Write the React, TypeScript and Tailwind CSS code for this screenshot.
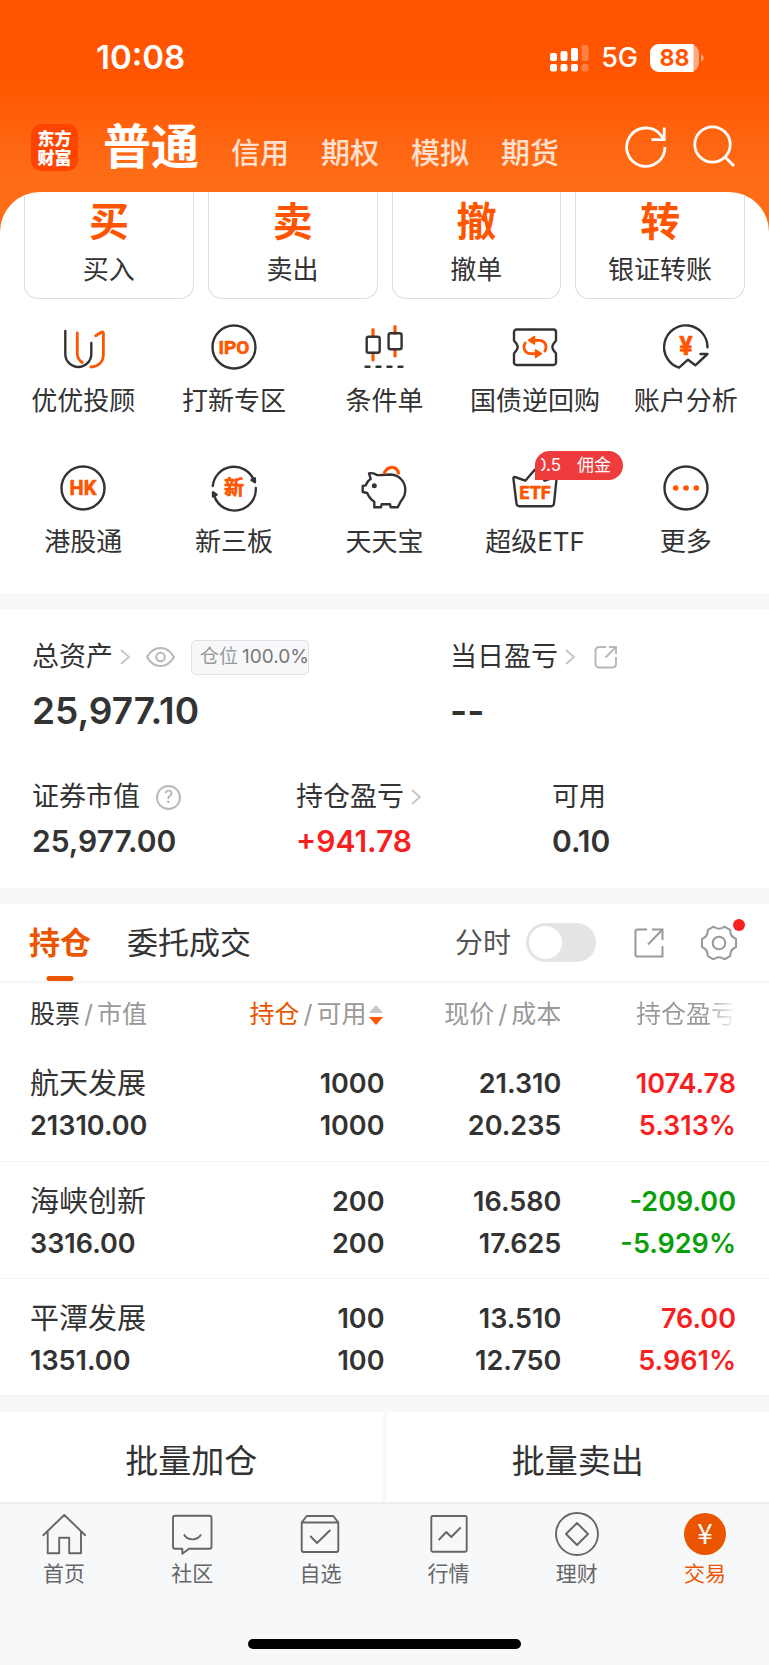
import React, { useState } from 'react';

interface Holding {
  name: string;
  marketValue: string;
  amount: string;
  available: string;
  price: string;
  cost: string;
  profit: string;
  profitRate: string;
  up: boolean; // red when up, green when down
}

const holdings: Holding[] = [
  { name: '航天发展', marketValue: '21310.00', amount: '1000', available: '1000', price: '21.310', cost: '20.235', profit: '1074.78', profitRate: '5.313%', up: true },
  { name: '海峡创新', marketValue: '3316.00', amount: '200', available: '200', price: '16.580', cost: '17.625', profit: '-209.00', profitRate: '-5.929%', up: false },
  { name: '平潭发展', marketValue: '1351.00', amount: '100', available: '100', price: '13.510', cost: '12.750', profit: '76.00', profitRate: '5.961%', up: true },
];

const quickActions = [
  { mark: '买', label: '买入' },
  { mark: '卖', label: '卖出' },
  { mark: '撤', label: '撤单' },
  { mark: '转', label: '银证转账' },
];

// shared wrapper for the 48px service icons
const ServiceIcon: React.FC<{ children: React.ReactNode }> = ({ children }) => (
  <svg className="size-12 overflow-visible" viewBox="0 0 48 48" fill="none" stroke="#333" strokeWidth={2.4} strokeLinecap="round" strokeLinejoin="round" aria-hidden="true">
    {children}
  </svg>
);

// short orange word inside an icon
const IconText: React.FC<{ y: number; size: number; children: string }> = ({ y, size, children }) => (
  <text x="24" y={y} fontSize={size} textAnchor="middle" fill="#ff5500" stroke="#ff5500" strokeWidth={0.6} className="font-['Roboto','Noto_Sans_CJK_SC',sans-serif] font-bold">
    {children}
  </text>
);

const services = [
  {
    label: '优优投顾',
    icon: (
      <>
        <path d="M6.3 8v23a13 13 0 0 0 26 0V20" />
        <path d="M18.3 10v21c0 4 2 6.5 5 8.5M36.7 12.7l5.5-3.5c1.2-.7 2.2-.2 2.2 1.2V31c0 8-5 12.5-12.5 13" stroke="#ff5500" strokeWidth={2.8} />
      </>
    ),
  },
  {
    label: '打新专区',
    icon: (
      <>
        <circle cx="24" cy="24" r="21.5" />
        <IconText y={31} size={19}>IPO</IconText>
      </>
    ),
  },
  {
    label: '条件单',
    icon: (
      <>
        <path d="M13 6.5v7M13 30v7M35 3.5v7M35 26.5v6.5" stroke="#ff5500" strokeWidth={3.2} />
        <rect x="6.7" y="13.7" width="13" height="16" rx="2" />
        <rect x="28.6" y="10.3" width="13" height="16" rx="2" />
        <path d="M5.5 43.7h4M16.5 43.7h4M27.5 43.7h4M38.5 43.7h4" />
      </>
    ),
  },
  {
    label: '国债逆回购',
    icon: (
      <>
        <path d="M5.5 6.5h37A2.5 2.5 0 0 1 45 9v8.5c0 1-3.7 3-3.7 6.5s3.7 5.5 3.7 6.5v9a2.5 2.5 0 0 1-2.5 2.5h-37A2.5 2.5 0 0 1 3 39.5v-9c0-1 3.7-3 3.7-6.500S3 18.500 3 17.500V9a2.500 2.500 0 0 1 2.500-2.500z" />
        <path d="M22 17.300h6.500a6.500 6.500 0 0 1 6.500 6.700c0 1.500-.4 2.800-1.200 4M26 30.700h-6.500a6.500 6.500 0 0 1-6.500-6.700c0-1.500.4-2.800 1.200-4" stroke="#ff5500" strokeWidth={2.8} />
        <path d="M17.500 17.300l6-3.800v7.600zM30.500 30.700l-6-3.800v7.600z" fill="#ff5500" stroke="#ff5500" strokeWidth={1.5} />
      </>
    ),
  },
  {
    label: '账户分析',
    icon: (
      <>
        <path d="M45.5 24.3A21.7 21.7 0 1 0 17 44.700l9-8 7.300 5.600L45.500 31h-7" />
        <IconText y={32} size={25}>¥</IconText>
      </>
    ),
  },
  {
    label: '港股通',
    icon: (
      <>
        <circle cx="24" cy="24" r="21.5" />
        <IconText y={31} size={20}>HK</IconText>
      </>
    ),
  },
  {
    label: '新三板',
    icon: (
      <>
        <path d="M2.800 22A21.300 21.300 0 0 1 43.500 15.500M45.800 24A21.300 21.300 0 0 1 4.500 32.500" />
        <path d="M45 18.300l-3.500-2.200 3.300-1.800zM3 28.200l3.500 2.500-3.500 1.800z" fill="#333" />
        <IconText y={31} size={20}>新</IconText>
      </>
    ),
  },
  {
    label: '天天宝',
    icon: (
      <>
        <path d="M9 9.500c3-1 5.500-.2 8 1.500 5 .4 9-.5 14-.5 8 .5 14.300 7 14.300 15.500 0 5-2 8.500-4.600 11.500l-3 5.800h-7l-.7-3h-8.300l-.7 3h-6.700v-5.600c-3.500-2-5.500-5-7.100-8.700l-4.500-1v-6l3-.7c1-2.800 2.500-4.800 5-6.500z" />
        <circle cx="14.3" cy="21.7" r="2.5" fill="#333" stroke="none" />
        <path d="M24.500 8.500c3.500-7 12-7 14 .5" stroke="#ff5500" strokeWidth={3.2} />
      </>
    ),
  },
  {
    label: '超级ETF',
    badge: true,
    icon: (
      <>
        <path d="M4 13l10.300 3.700L24 5.500l9.700 11.200L44 13c1-.3 1.700.2 1.600 1.300L43 39.500c-.2 2-1 2.700-3 2.700H8.500c-2 0-2.800-.7-3-2.700L2.400 14.300C2.300 13.200 3 12.700 4 13z" />
        <IconText y={35} size={18}>ETF</IconText>
      </>
    ),
  },
  {
    label: '更多',
    icon: (
      <>
        <circle cx="24" cy="24" r="21.5" />
        <g fill="#ff5500" stroke="none">
          <circle cx="13.7" cy="24" r="2.8" />
          <circle cx="24" cy="24" r="2.8" />
          <circle cx="34.3" cy="24" r="2.8" />
        </g>
      </>
    ),
  },
];

const bottomTabs = [
  { label: '首页', icon: <path d="M2.700 25.700L24.300 5l21.400 20.700M7.700 21v22.300h11.500V27.700h10v15.600H41V21" /> },
  {
    label: '社区',
    icon: (
      <>
        <path d="M7 5.700h34.500a2 2 0 0 1 2 2v29a2 2 0 0 1-2 2H21l-6.700 5v-5H7a2 2 0 0 1-2-2v-29a2 2 0 0 1 2-2z" />
        <path d="M16 24.500c3.500 6.500 13.500 6.500 17 0" />
      </>
    ),
  },
  {
    label: '自选',
    icon: (
      <>
        <path d="M5.700 12.500h36.600V40a2 2 0 0 1-2 2H7.700a2 2 0 0 1-2-2V12.500l5-6.500h26.600l5 6.500" />
        <path d="M14.300 26l6.700 7 13.300-13" />
      </>
    ),
  },
  {
    label: '行情',
    icon: (
      <>
        <rect x="6.3" y="6" width="35.4" height="35.7" rx="1.5" />
        <path d="M13.700 30l7.600-8 5 5 9.400-9.700" />
      </>
    ),
  },
  {
    label: '理财',
    icon: (
      <>
        <circle cx="24" cy="24" r="21" />
        <path d="M24 13l11 11-11 11-11-11z" />
      </>
    ),
  },
  {
    label: '交易',
    active: true,
    icon: (
      <>
        <circle cx="24" cy="24" r="21" fill="#eb5500" stroke="none" />
        <text x="24" y="34" fontSize="28" textAnchor="middle" fill="#fff" stroke="none" className="font-['Noto_Sans_CJK_SC',sans-serif]">¥</text>
      </>
    ),
  },
];

const Chevron = () => (
  <svg className="h-[18px] w-3" viewBox="0 0 12 18" fill="none" stroke="#c4c4c4" strokeWidth={1.8} aria-hidden="true">
    <path d="M2 2l8 7-8 7" />
  </svg>
);

// iOS-like status bar
const StatusBar = () => (
  <div className="flex h-[114px] items-center justify-between pl-24 pr-[65px] pt-0.5 text-white">
    <span className="text-[33px] font-semibold">10:08</span>
    <div className="flex items-center">
      <svg className="mr-3 h-7 w-[39px]" viewBox="0 0 39 28" fill="#fff" aria-hidden="true">
        <rect x="0" y="9" width="7" height="8" rx="2" />
        <rect x="10.5" y="7" width="7" height="10" rx="2" />
        <rect x="21" y="4" width="7" height="13" rx="2" />
        <rect x="31.5" y="1" width="7" height="16" rx="2" opacity=".25" />
        <rect x="0" y="20" width="7" height="7.5" rx="2" />
        <rect x="10.5" y="20" width="7" height="7.5" rx="2" />
        <rect x="21" y="20" width="7" height="7.5" rx="2" />
        <rect x="31.5" y="20" width="7" height="7.5" rx="2" opacity=".25" />
      </svg>
      <span className="mr-3 text-[27px] font-medium">5G</span>
      <svg className="h-7 w-[54px]" viewBox="0 0 54 28" aria-hidden="true">
        <rect x="0" y="0" width="49" height="28" rx="9" fill="#fff" opacity=".5" />
        <path d="M9 0H43.500V28H9a9 9 0 0 1-9-9V9a9 9 0 0 1 9-9z" fill="#fff" />
        <path d="M51 10.500c3.500 1 3.500 6 0 7z" fill="#fff" opacity=".5" />
        <text x="24.5" y="22" fontSize="23" textAnchor="middle" fill="#ff5500" className="font-bold">88</text>
      </svg>
    </div>
  </div>
);

const Header = () => (
  <header className="bg-linear-to-b from-[#ff5500] from-40% to-[#ff6c16] to-90%">
    <StatusBar />
    <div className="flex h-[78px] items-center pb-3 pl-[31px] pr-[33px]">
      <div className="flex size-[47px] shrink-0 items-center justify-center rounded-[10px] bg-[#ff4400] text-white">
        <p className="w-[34px] font-['Noto_Sans_CJK_SC',sans-serif] text-[17px] leading-[19px] font-black">东方财富</p>
      </div>
      <nav className="ml-[25px] flex items-baseline gap-8 whitespace-nowrap text-[29px] font-medium text-white/80">
        <a href="#normal" className="text-[48px] leading-[60px] font-bold text-white">普通</a>
        <a href="#credit">信用</a>
        <a href="#option">期权</a>
        <a href="#sim">模拟</a>
        <a href="#future">期货</a>
      </nav>
      <div className="ml-auto flex gap-6">
        <button aria-label="刷新">
          <svg className="size-11" viewBox="0 0 44 44" fill="none" stroke="#fff" strokeWidth={2.8}>
            <path d="M41 22A19.200 19.200 0 1 1 36.500 9.800L40 14" />
            <path d="M40.200 2.500v12.200H27.500" />
          </svg>
        </button>
        <button aria-label="搜索">
          <svg className="size-11" viewBox="0 0 44 44" fill="none" stroke="#fff" strokeWidth={2.8}>
            <circle cx="20.5" cy="19.5" r="17.7" />
            <path d="M32.500 31.500l9.500 9.500" />
          </svg>
        </button>
      </div>
    </div>
  </header>
);

const Assets = () => (
  <section className="px-8 pt-7 pb-[27px] text-[#333]">
    <div className="grid grid-cols-[418fr_287fr]">
      <div>
        <div className="flex h-10 items-center text-[27px]">
          <span>总资产</span>
          <span className="ml-1.5"><Chevron /></span>
          <button className="ml-[15px]" aria-label="隐藏资产">
            <svg className="h-5 w-[29px]" viewBox="0 0 29 20" fill="none" stroke="#b8b8b8" strokeWidth={2}>
              <path d="M1 10C8-2 21-2 28 10 21 22 8 22 1 10z" />
              <circle cx="14.5" cy="10" r="4.3" />
            </svg>
          </button>
          <span className="ml-4 flex h-[35px] w-[118px] items-center gap-1 overflow-hidden whitespace-nowrap rounded-[5px] border border-[#e0e1e4] bg-[#f7f8fa] pl-2 text-[19px] text-[#777]">
            <span className="text-[#999]">仓位</span>
            <span>100.0%</span>
          </span>
        </div>
        <p className="mt-2.5 text-[37px] leading-[48px] font-semibold">25,977.10</p>
      </div>
      <div>
        <div className="flex h-10 items-center text-[27px]">
          <span>当日盈亏</span>
          <span className="ml-1.5"><Chevron /></span>
          <button className="ml-[18px]" aria-label="分享当日盈亏">
            <svg className="size-6" viewBox="0 0 24 24" fill="none" stroke="#b8b8b8" strokeWidth={2}>
              <path d="M12 2H5a3.500 3.500 0 0 0-3.500 3.500V19A3.500 3.500 0 0 0 5 22.500h13.500A3.500 3.500 0 0 0 22 19v-7M15 2h7v7M22 2L11.500 12.500" />
            </svg>
          </button>
        </div>
        <p className="mt-2.5 text-[37px] leading-[48px] font-semibold">--</p>
      </div>
    </div>
    <div className="mt-[42px] grid grid-cols-[264fr_256fr_185fr]">
      <div>
        <div className="flex h-10 items-center text-[27px]">
          <span>证券市值</span>
          <button className="ml-4 flex size-[25px] items-center justify-center rounded-full border-2 border-[#b8b8b8] text-[17px] leading-none text-[#aaa]" aria-label="证券市值说明">?</button>
        </div>
        <p className="mt-1 text-[30px] leading-10 font-semibold">25,977.00</p>
      </div>
      <div>
        <div className="flex h-10 items-center text-[27px]">
          <span>持仓盈亏</span>
          <span className="ml-1.5"><Chevron /></span>
        </div>
        <p className="mt-1 text-[30px] leading-10 font-semibold text-[#f91f1f]">+941.78</p>
      </div>
      <div>
        <div className="flex h-10 items-center text-[27px]">可用</div>
        <p className="mt-1 text-[30px] leading-10 font-semibold">0.10</p>
      </div>
    </div>
  </section>
);

const App: React.FC = () => {
  const [tab, setTab] = useState('持仓');
  const [timeline, setTimeline] = useState(false); // intraday chart switch

  return (
    <div className="flex min-h-screen flex-col bg-[#ff6c16] font-['Inter','Noto_Sans_CJK_SC',sans-serif] text-[#333]">
      <Header />

      <main className="overflow-hidden rounded-t-[40px] bg-white">
        {/* buy / sell / cancel / transfer, scrolled halfway under the header */}
        <div className="grid grid-cols-4 gap-3.5 px-6">
          {quickActions.map((a) => (
            <button key={a.label} className="flex flex-col items-center rounded-b-[14px] border border-t-0 border-[#dcdcdc] pt-1.5 pb-2.5">
              <span className="text-[40px] leading-[48px] font-bold text-[#ff5500]">{a.mark}</span>
              <span className="mt-1.5 text-[26px] leading-9">{a.label}</span>
            </button>
          ))}
        </div>

        <div className="grid grid-cols-5 gap-y-[45px] px-2 pt-6 pb-[33px]">
          {services.map((s) => (
            <button key={s.label} className="relative flex flex-col items-center whitespace-nowrap">
              <ServiceIcon>{s.icon}</ServiceIcon>
              <span className="mt-3 text-[26px] leading-9">{s.label}</span>
              {s.badge && (
                <span className="absolute -top-[13px] left-1/2 flex h-[29px] w-22 items-center rounded-[15px] rounded-bl-none bg-[#ee3b3b] pl-1.5 text-[17px] text-white">
                  <span className="flex w-5 justify-end overflow-hidden">0.5</span>
                  <span className="ml-4">佣金</span>
                </span>
              )}
            </button>
          ))}
        </div>

        <div className="h-4 bg-[#f7f8fa]" />
        <Assets />
        <div className="h-4 bg-[#f7f8fa]" />

        {/* holdings tabs */}
        <div className="flex h-[79px] items-center border-b-2 border-[#f5f5f6] pr-8 pl-[29px]">
          {['持仓', '委托成交'].map((t) => (
            <button
              key={t}
              onClick={() => setTab(t)}
              className={`relative mr-9 h-[77px] pt-0.5 text-[31px] ${tab === t ? 'font-bold text-[#eb5500]' : ''}`}
            >
              {t}
              {tab === t && <span className="absolute bottom-0 left-1/2 h-[5px] w-[27px] -translate-x-1/2 rounded-full bg-[#eb5500]" />}
            </button>
          ))}
          <label className="ml-auto flex items-center gap-[15px] text-[28px] text-[#555]">
            分时
            <input
              type="checkbox"
              checked={timeline}
              onChange={(e) => setTimeline(e.target.checked)}
              className="h-[39px] w-[70px] appearance-none rounded-full bg-[#e4e4e6] p-[3px] before:block before:size-[33px] before:rounded-full before:bg-white checked:bg-[#eb5500] checked:before:ml-auto"
            />
          </label>
          <button className="ml-[38px]" aria-label="分享持仓">
            <svg className="size-[30px]" viewBox="0 0 30 30" fill="none" stroke="#999" strokeWidth={2}>
              <path d="M13 1.500H3A1.500 1.500 0 0 0 1.500 3v24A1.500 1.500 0 0 0 3 28.500h25.500V18M18 1.500h10.500V12M28.500 1.500L14 16.500" />
            </svg>
          </button>
          <button className="relative ml-[37px]" aria-label="设置">
            <svg className="size-9" viewBox="0 0 36 36" fill="none" stroke="#999" strokeWidth={2} strokeLinejoin="round">
              <path d="M14 2.500c2.500 1.600 5.500 1.600 8 0l2-.7 5 3c.6 1 .3 2 .5 3.200.4 2.300 1.700 4 4 5.200l1.500.8v8l-1.500.8c-2.300 1.200-3.600 2.900-4 5.200-.2 1.200.1 2.200-.5 3.200l-5 3-2-.7c-2.500-1.600-5.500-1.600-8 0l-2 .7-5-3c-.6-1-.3-2-.5-3.200-.4-2.300-1.700-4-4-5.200L1 22v-8l1.500-.8c2.300-1.200 3.600-2.900 4-5.200.2-1.200-.1-2.200.5-3.200l5-3z" />
              <circle cx="18" cy="18" r="6.3" />
            </svg>
            <span className="absolute -top-1.5 -right-2 size-3 rounded-full bg-[#f91f1f]" />
          </button>
        </div>

        <table className="w-full table-fixed">
          <thead>
            <tr className="h-[61px] whitespace-nowrap text-[25px] text-[#999]">
              <th className="w-[27%] pt-0.5 pb-0 pl-[30px] font-normal">
                <div className="flex gap-1"><span className="text-[#333]">股票</span><span>/</span><span>市值</span></div>
              </th>
              <th className="w-[23%] pt-0.5 pb-0 font-normal">
                <div className="flex items-center justify-end gap-1">
                  <span className="text-[#eb5500]">持仓</span><span>/</span><span>可用</span>
                  <svg className="-ml-0.5 h-5 w-4" viewBox="0 0 16 20" aria-hidden="true">
                    <path d="M8 0l7 8H1z" fill="#c8c8c8" />
                    <path d="M8 20l7-8H1z" fill="#ff5500" />
                  </svg>
                </div>
              </th>
              <th className="w-[23%] pt-0.5 pb-0 font-normal">
                <div className="flex justify-end gap-1"><span>现价</span><span>/</span><span>成本</span></div>
              </th>
              <th className="w-[27%] pt-0.5 pr-[33px] pb-0 font-normal">
                <div className="flex justify-end">
                  <span className="bg-linear-to-r from-[#999] from-70% to-white bg-clip-text text-transparent">持仓盈亏</span>
                </div>
              </th>
            </tr>
          </thead>
          <tbody>
            {holdings.map((h) => (
              <tr key={h.name} className="h-[117px] border-b border-[#f2f2f4] text-right text-[27px] leading-[42px] font-semibold">
                <td className="pt-1.5 pl-[30px] text-left">
                  <div className="text-[29px] font-normal">{h.name}</div>
                  <div>{h.marketValue}</div>
                </td>
                <td className="pt-1.5">
                  <div>{h.amount}</div>
                  <div>{h.available}</div>
                </td>
                <td className="pt-1.5">
                  <div>{h.price}</div>
                  <div>{h.cost}</div>
                </td>
                <td className={`pt-1.5 pr-[33px] ${h.up ? 'text-[#f91f1f]' : 'text-[#0a9f0a]'}`}>
                  <div>{h.profit}</div>
                  <div>{h.profitRate}</div>
                </td>
              </tr>
            ))}
          </tbody>
        </table>

        <div className="h-4 bg-[#f7f8fa]" />
        <div className="grid h-[90px] grid-cols-2 gap-1 bg-[#f7f8fa] text-[33px]">
          <button className="bg-white pt-2.5">批量加仓</button>
          <button className="bg-white pt-2.5">批量卖出</button>
        </div>
      </main>

      <footer className="grow border-t-2 border-[#ededef] bg-[#f7f8fa] pb-4">
        <nav className="grid grid-cols-6 pt-1.5">
          {bottomTabs.map((t) => (
            <a key={t.label} href={`#${t.label}`} className={`flex flex-col items-center text-[21px] leading-7 ${t.active ? 'text-[#eb5500]' : 'text-[#666]'}`}>
              <svg className="size-12" viewBox="0 0 48 48" fill="none" stroke="#666" strokeWidth={1.9} strokeLinejoin="round" aria-hidden="true">
                {t.icon}
              </svg>
              <span className="mt-0.5">{t.label}</span>
            </a>
          ))}
        </nav>
        <div className="mx-auto mt-[51px] h-2.5 w-[273px] rounded-full bg-black" />
      </footer>
    </div>
  );
};

export default App;
